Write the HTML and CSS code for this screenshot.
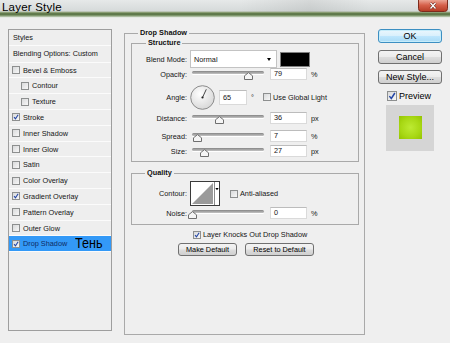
FILE: index.html
```html
<!DOCTYPE html>
<html lang="en">
<head>
  <title>Layer Style</title>
  <link rel="stylesheet" href="styles.css">
</head>
<body>
  <div class="titlebar">
    <span class="title">Layer Style</span>
    <span class="close">
      <svg width="30" height="12" viewBox="0 0 30 12">
        <defs>
          <linearGradient id="red" x1="0" y1="0" x2="0" y2="1">
            <stop offset="0" stop-color="#eba594"/>
            <stop offset="0.45" stop-color="#d6604a"/>
            <stop offset="1" stop-color="#b33a23"/>
          </linearGradient>
        </defs>
        <path d="M0.5 0V8.5Q0.5 11.5 3.5 11.5H26.5Q29.5 11.5 29.5 8.5V0" fill="url(#red)" stroke="#7d2b1c"/>
        <path d="M12.5 3L17.5 8.5M17.5 3L12.5 8.5" stroke="#5a1a10" stroke-width="2.6"/>
        <path d="M12.5 3L17.5 8.5M17.5 3L12.5 8.5" stroke="#fff" stroke-width="1.4"/>
      </svg>
    </span>
  </div>

  <div class="content">
    <!-- list of effects -->
    <div class="styles-list">
      <div class="list-head">Styles</div>
      <div class="list-head blending">Blending Options: Custom</div>
      <div class="list-item"><span class="check"></span>Bevel &amp; Emboss</div>
      <div class="list-item sub"><span class="check"></span>Contour</div>
      <div class="list-item sub"><span class="check"></span>Texture</div>
      <div class="list-item"><span class="check"><svg viewBox="0 0 7 7"><path d="M1.2 3.6L2.9 5.6L6 0.9"/></svg></span>Stroke</div>
      <div class="list-item"><span class="check"></span>Inner Shadow</div>
      <div class="list-item"><span class="check"></span>Inner Glow</div>
      <div class="list-item"><span class="check"></span>Satin</div>
      <div class="list-item"><span class="check"></span>Color Overlay</div>
      <div class="list-item"><span class="check"><svg viewBox="0 0 7 7"><path d="M1.2 3.6L2.9 5.6L6 0.9"/></svg></span>Gradient Overlay</div>
      <div class="list-item"><span class="check"></span>Pattern Overlay</div>
      <div class="list-item"><span class="check"></span>Outer Glow</div>
      <div class="list-item selected"><span class="check"><svg viewBox="0 0 7 7"><path d="M1.2 3.6L2.9 5.6L6 0.9"/></svg></span>Drop Shadow<span class="note">Тень</span></div>
    </div>

    <!-- drop shadow settings -->
    <fieldset class="group main">
      <legend>Drop Shadow</legend>

      <fieldset class="group structure">
        <legend>Structure</legend>
        <div class="row blend-row">
          <span class="label">Blend Mode:</span>
          <span class="select">Normal<span class="arrow"></span></span>
          <span class="swatch"></span>
        </div>
        <div class="row slider-row">
          <span class="label">Opacity:</span>
          <span class="slider"><span class="track"></span><span class="thumb" style="left: 78%"><svg width="9" height="8" viewBox="0 0 9 8"><path d="M0.5 7.5V3.8L4.5 0.6L8.5 3.8V7.5Z"/></svg></span></span>
          <span class="field">79</span>
          <span class="unit">%</span>
        </div>
        <div class="row angle-row">
          <span class="label">Angle:</span>
          <svg class="dial" width="25" height="25" viewBox="0 0 25 25">
            <defs>
              <radialGradient id="dialfill" cx="0.4" cy="0.35" r="0.7">
                <stop offset="0" stop-color="#ffffff"/>
                <stop offset="1" stop-color="#d6d6d6"/>
              </radialGradient>
            </defs>
            <circle cx="12.5" cy="12.5" r="11.8" fill="url(#dialfill)" stroke="#8c8c8c"/>
            <path d="M12.5 12.5L16.3 4.3" stroke="#333" stroke-width="0.9"/>
            <circle cx="12.5" cy="12.5" r="1.1" fill="#222"/>
          </svg>
          <span class="field angle">65</span>
          <span class="unit deg">°</span>
          <span class="check"></span>
          <span class="check-text">Use Global Light</span>
        </div>
        <div class="row slider-row distance">
          <span class="label">Distance:</span>
          <span class="slider"><span class="track"></span><span class="thumb" style="left: 38%"><svg width="9" height="8" viewBox="0 0 9 8"><path d="M0.5 7.5V3.8L4.5 0.6L8.5 3.8V7.5Z"/></svg></span></span>
          <span class="field">36</span>
          <span class="unit">px</span>
        </div>
        <div class="row slider-row spread">
          <span class="label">Spread:</span>
          <span class="slider"><span class="track"></span><span class="thumb" style="left: 8%"><svg width="9" height="8" viewBox="0 0 9 8"><path d="M0.5 7.5V3.8L4.5 0.6L8.5 3.8V7.5Z"/></svg></span></span>
          <span class="field">7</span>
          <span class="unit">%</span>
        </div>
        <div class="row slider-row size">
          <span class="label">Size:</span>
          <span class="slider"><span class="track"></span><span class="thumb" style="left: 17%"><svg width="9" height="8" viewBox="0 0 9 8"><path d="M0.5 7.5V3.8L4.5 0.6L8.5 3.8V7.5Z"/></svg></span></span>
          <span class="field">27</span>
          <span class="unit">px</span>
        </div>
      </fieldset>

      <fieldset class="group quality">
        <legend>Quality</legend>
        <div class="row contour-row">
          <span class="label">Contour:</span>
          <svg class="contour" width="30" height="25" viewBox="0 0 30 25">
            <rect x="0.5" y="0.5" width="29" height="24" fill="#fff" stroke="#3a3a3a"/>
            <path d="M2 23L23 2V23Z" fill="#9a9a9a"/>
            <path d="M24.5 1V24" stroke="#8a8a8a"/>
            <path d="M25.3 7H28.7L27 9.2Z" fill="#000"/>
          </svg>
          <span class="check anti"></span>
          <span class="check-text">Anti-aliased</span>
        </div>
        <div class="row slider-row noise">
          <span class="label">Noise:</span>
          <span class="slider"><span class="track"></span><span class="thumb" style="left: 1%"><svg width="9" height="8" viewBox="0 0 9 8"><path d="M0.5 7.5V3.8L4.5 0.6L8.5 3.8V7.5Z"/></svg></span></span>
          <span class="field">0</span>
          <span class="unit">%</span>
        </div>
      </fieldset>

      <div class="knock-row">
        <span class="check"><svg viewBox="0 0 7 7"><path d="M1.2 3.6L2.9 5.6L6 0.9"/></svg></span>
        <span class="check-text">Layer Knocks Out Drop Shadow</span>
      </div>
      <div class="default-row">
        <span class="btn make">Make Default</span>
        <span class="btn reset">Reset to Default</span>
      </div>
    </fieldset>

    <!-- dialog buttons and preview -->
    <div class="side">
      <div class="side-btn primary">OK</div>
      <div class="side-btn">Cancel</div>
      <div class="side-btn">New Style...</div>
      <div class="preview-row">
        <span class="check big"><svg viewBox="0 0 7 7"><path d="M1.2 3.6L2.9 5.6L6 0.9"/></svg></span>Preview
      </div>
      <div class="preview-box"><div class="preview-swatch"></div></div>
    </div>
  </div>
</body>
</html>
```

FILE: styles.css
```css
body {
  margin: 0;
  width: 450px;
  height: 343px;
  overflow: hidden;
  background: #efefef;
  font-family: "Liberation Sans", Arial, sans-serif;
  font-size: 7.3px;
  color: #151515;
}
.titlebar {
  height: 18px;
  display: flex;
  align-items: flex-start;
  background:
    linear-gradient(to right, rgba(0,0,0,0) 240px, rgba(0,0,0,0.07) 310px, rgba(0,0,0,0) 370px) top / 100% 12px no-repeat,
    linear-gradient(to bottom, #e6e9e9 0, #d6dada 11px, #8a9d74 12.5px, #4e6a39 14px, #90a67f 16px, #e4e9e2 17.5px, #efefef 18px);
}
.title {
  font-size: 11.5px;
  line-height: 11px;
  letter-spacing: 0.2px;
  padding: 2px 0 0 2px;
  color: #000;
}
.close {
  margin-left: auto;
  margin-right: 2px;
  height: 12px;
}
.close svg {
  display: block;
}
.content {
  display: flex;
  align-items: flex-start;
  padding-left: 8px;
}

/* left list */
.styles-list {
  box-sizing: border-box;
  width: 104px;
  height: 302px;
  margin-top: 11px;
  border: 1px solid #9e9e9e;
  background: #eeeeee;
}
.list-head, .list-item {
  box-sizing: border-box;
  display: flex;
  align-items: center;
  border-bottom: 1px solid #fbfbfb;
  white-space: nowrap;
}
.list-head {
  height: 16px;
  padding-left: 4px;
}
.list-head.blending {
  height: 16.7px;
}
.list-item {
  height: 15.8px;
  padding-left: 3px;
}
.list-item.sub {
  padding-left: 12px;
}
.list-item.selected {
  background: #3399f7;
  color: #0e2c66;
}
.note {
  display: inline-block;
  margin-left: 8px;
  margin-top: -3px;
  font-size: 15px;
  line-height: 15px;
  color: #000;
  transform: scaleX(0.84);
  transform-origin: left center;
}

.check {
  box-sizing: border-box;
  display: inline-block;
  flex: none;
  width: 8px;
  height: 8px;
  margin-right: 3px;
  border: 1px solid #8d8f8f;
  background: linear-gradient(135deg, #d9dadb, #f7f7f7);
}
.check svg {
  display: block;
  width: 6px;
  height: 6px;
}
.check path {
  fill: none;
  stroke: #2446a6;
  stroke-width: 1.3;
}
.check.big {
  width: 10px;
  height: 10px;
}
.check.big svg {
  width: 8px;
  height: 8px;
}

/* fieldsets */
.group {
  box-sizing: border-box;
  margin: 0;
  min-width: 0;
  border: 1px solid #a9a9a9;
}
.group legend {
  font-weight: bold;
  line-height: 10px;
  padding: 0 2px;
  color: #111;
}
.main {
  width: 241px;
  margin-top: 10px;
  margin-left: 12px;
  padding: 0 5px 78px 6px;
}
.main > legend {
  margin-left: 7px;
}
.structure {
  padding: 0 0 4px 0;
}
.structure > legend {
  margin-left: 14px;
}
.quality {
  margin-top: 6px;
  padding: 0 0 5px 0;
}
.quality > legend {
  margin-left: 13px;
}

.row {
  display: flex;
  align-items: center;
  white-space: nowrap;
}
.label {
  width: 55px;
  text-align: right;
  flex: none;
}
.blend-row {
  height: 18px;
  margin-top: 2px;
}
.select {
  box-sizing: border-box;
  display: flex;
  align-items: center;
  width: 87px;
  height: 18px;
  margin-left: 3px;
  padding-left: 3px;
  background: #fff;
  border: 1px solid #c3c3c3;
}
.arrow {
  margin-left: auto;
  margin-right: 5px;
  border-left: 2.5px solid transparent;
  border-right: 2.5px solid transparent;
  border-top: 3px solid #000;
}
.swatch {
  box-sizing: border-box;
  width: 30px;
  height: 15px;
  margin-left: 3px;
  background: #000;
  border: 1px solid #808080;
}

.slider-row {
  height: 12px;
}
.slider-row.distance {
  margin-top: 2px;
}
.slider-row.spread {
  margin-top: 6px;
}
.slider-row.size {
  margin-top: 3px;
}
.slider-row.noise {
  margin-top: 1px;
}
.slider {
  position: relative;
  display: block;
  width: 72px;
  height: 12px;
  margin-left: 5px;
}
.track {
  display: block;
  height: 3px;
  margin-top: 3px;
  border-radius: 2px;
  background: linear-gradient(#858585, #c4c4c4);
  box-shadow: 0 1px 0 #fff;
}
.thumb {
  position: absolute;
  top: 4px;
  margin-left: -4.5px;
  height: 8px;
}
.thumb svg {
  display: block;
}
.thumb path {
  fill: #f5f5f5;
  stroke: #6f6f6f;
}
.field {
  box-sizing: border-box;
  width: 37px;
  height: 12px;
  margin-left: 6px;
  padding-left: 3px;
  line-height: 10px;
  background: #fff;
  border: 1px solid #dadada;
  border-top-color: #bcbcbc;
}
.unit {
  margin-left: 4px;
}

.angle-row {
  height: 26px;
  margin-top: 4px;
}
.dial {
  display: block;
  margin-left: 3px;
}
.field.angle {
  width: 28px;
  height: 15px;
  line-height: 13px;
  margin-left: 4px;
}
.unit.deg {
  width: 3px;
  margin-right: 9px;
}
.check-text {
  margin-left: -1px;
}

.contour-row {
  height: 25px;
  margin-top: 3px;
}
.contour {
  display: block;
  margin-left: 3px;
}
.check.anti {
  margin-left: 10px;
}

.knock-row {
  display: flex;
  align-items: center;
  height: 9px;
  margin-top: 5px;
  padding-left: 62px;
}
.default-row {
  display: flex;
  gap: 8px;
  margin-top: 4px;
  padding-left: 47px;
}
.btn, .side-btn {
  box-sizing: border-box;
  text-align: center;
  color: #000;
  border: 1px solid #707070;
  border-radius: 3px;
  background: linear-gradient(#f3f3f3, #ebebeb 48%, #dddddd 52%, #cfcfcf);
}
.btn {
  height: 13px;
  line-height: 11px;
}
.btn.make {
  width: 59px;
}
.btn.reset {
  width: 69px;
}

/* right column */
.side {
  display: flex;
  flex-direction: column;
  width: 64px;
  margin-left: 13px;
  margin-top: 11px;
  font-size: 9px;
}
.side-btn {
  height: 14px;
  line-height: 12px;
  margin-bottom: 6.5px;
}
.side-btn.primary {
  border-color: #3c8fc2;
  background: linear-gradient(#eaf6fd, #d9f0fc 48%, #bee6fd 52%, #a9dbf6);
  box-shadow: inset 0 0 0 1px #c6ecfa;
}
.preview-row {
  display: flex;
  align-items: center;
  height: 10px;
  padding-left: 9px;
  color: #000;
}
.preview-row .check {
  margin-right: 2px;
}
.preview-box {
  display: flex;
  align-items: center;
  justify-content: center;
  width: 48px;
  height: 46px;
  margin-top: 4px;
  margin-left: 8px;
  background: #d5d5d5;
}
.preview-swatch {
  width: 23px;
  height: 23px;
  background: radial-gradient(circle, #bdea32 0, #a8d814 60%, #94c400 100%);
}
```
